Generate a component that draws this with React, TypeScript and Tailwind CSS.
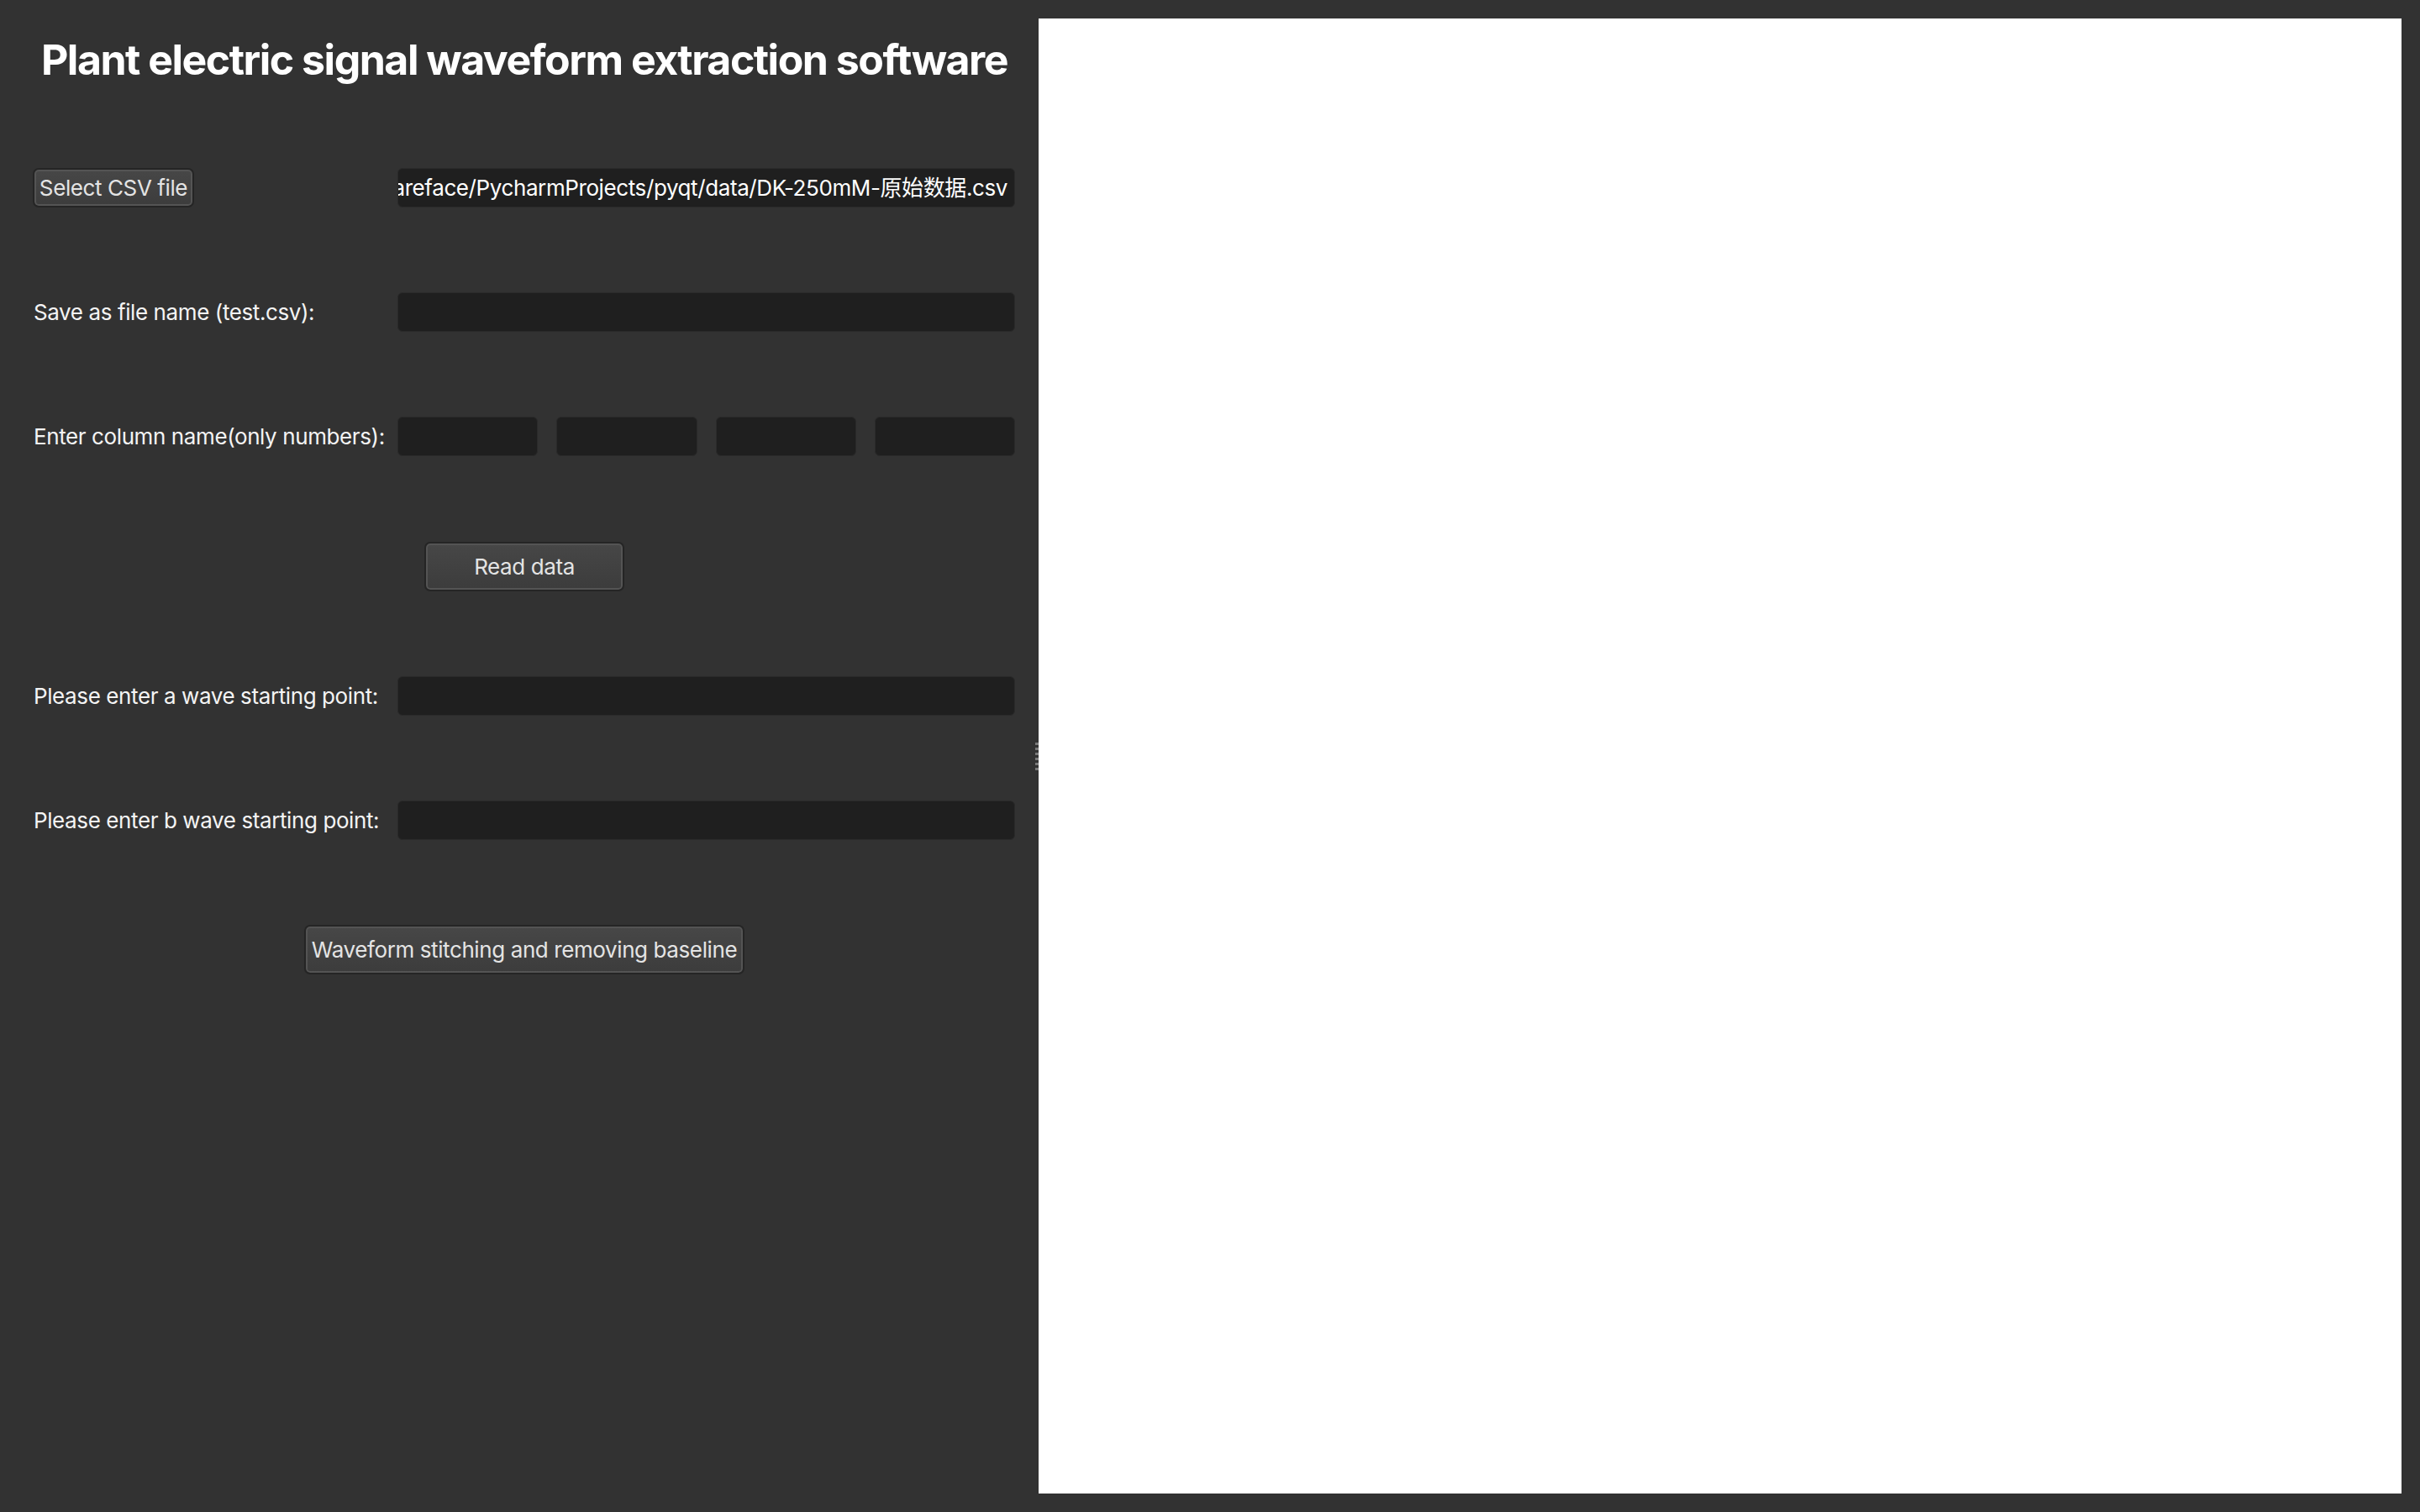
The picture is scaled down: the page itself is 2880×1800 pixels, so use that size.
import React from "react";

const labelCls =
  "w-[417px] shrink-0 text-[26px] leading-none tracking-[-0.4px] text-[#f4f4f4] whitespace-nowrap";
const inputCls =
  "h-[47px] rounded-[6px] border border-[#2a2a2a] bg-[#1f1f1f] text-[26px] tracking-[-0.4px] text-white outline-none";
const btnCls =
  "rounded-[7px] border-2 border-[#252525] bg-gradient-to-b from-[#474747] to-[#3c3c3c] shadow-[inset_0_0_0_2px_#545454] text-[26px] leading-none tracking-[-0.4px] text-[#e4e4e4] whitespace-nowrap";

function FormRow({ label, children }: { label: string; children: React.ReactNode }) {
  return (
    <div className="flex items-center gap-[16px]">
      <span className={labelCls}>{label}</span>
      <div className="flex flex-1 gap-[22px]">{children}</div>
    </div>
  );
}

export default function App() {
  return (
    <div
      className="flex h-[1800px] w-[2880px] bg-[#323232] pr-[22px] py-[22px]"
      style={{ fontFamily: "Inter, 'Noto Sans CJK SC', sans-serif" }}
    >
      {/* left control panel */}
      <div className="flex w-[1232px] shrink-0 flex-col pl-[40px] pr-[24px] -mt-[22px]">
        <h1 className="mt-[41px] h-[60px] text-center text-[50px] font-bold leading-[60px] tracking-[-1.5px] text-white whitespace-nowrap">
          Plant electric signal waveform extraction software
        </h1>

        <div className="mt-[99px] flex items-center gap-[16px]">
          <div className="w-[417px] shrink-0">
            <button className={`${btnCls} h-[47px] w-[192px] -ml-[1px]`}>Select CSV file</button>
          </div>
          <div className={`${inputCls} flex min-w-0 flex-1 items-center justify-end overflow-hidden pr-[8px]`}>
            <span className="whitespace-nowrap">
              /Users/softwareface/PycharmProjects/pyqt/data/DK-250mM-原始数据.csv
            </span>
          </div>
        </div>

        <div className="mt-[101px]">
          <FormRow label="Save as file name (test.csv):">
            <div className={`${inputCls} flex-1`} />
          </FormRow>
        </div>

        <div className="mt-[101px]">
          <FormRow label="Enter column name(only numbers):">
            <div className={`${inputCls} flex-1`} />
            <div className={`${inputCls} flex-1`} />
            <div className={`${inputCls} flex-1`} />
            <div className={`${inputCls} flex-1`} />
          </FormRow>
        </div>

        <div className="mt-[102px] flex justify-center">
          <button className={`${btnCls} h-[59px] w-[238px]`}>Read data</button>
        </div>

        <div className="mt-[101px]">
          <FormRow label="Please enter a wave starting point:">
            <div className={`${inputCls} flex-1`} />
          </FormRow>
        </div>

        <div className="mt-[101px]">
          <FormRow label="Please enter b wave starting point:">
            <div className={`${inputCls} flex-1`} />
          </FormRow>
        </div>

        <div className="mt-[101px] flex justify-center">
          <button className={`${btnCls} h-[59px] px-[7px]`}>Waveform stitching and removing baseline</button>
        </div>
      </div>

      {/* splitter handle */}
      <div className="flex w-[4px] shrink-0 flex-col items-end justify-center gap-[3px]">
        <div className="h-[3px] w-[4px] bg-[#7a7a7a]" />
        <div className="h-[3px] w-[4px] bg-[#7a7a7a]" />
        <div className="h-[3px] w-[4px] bg-[#7a7a7a]" />
        <div className="h-[3px] w-[4px] bg-[#7a7a7a]" />
        <div className="h-[3px] w-[4px] bg-[#7a7a7a]" />
        <div className="h-[3px] w-[4px] bg-[#7a7a7a]" />
      </div>

      {/* plot area */}
      <div className="flex-1 bg-white" />
    </div>
  );
}
